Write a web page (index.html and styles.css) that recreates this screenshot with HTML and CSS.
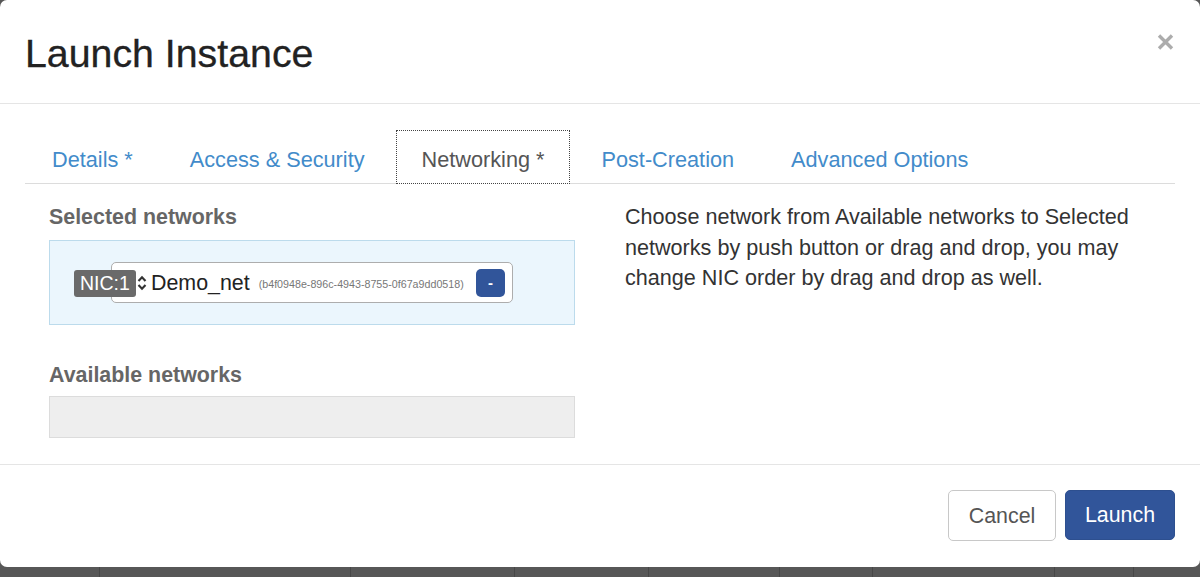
FILE: index.html
```html
<!DOCTYPE html>
<html>
<head>
<meta charset="utf-8">
<link rel="stylesheet" href="styles.css">
</head>
<body>
<div class="modal">
  <div class="modal-header">
    <h3 class="modal-title">Launch Instance</h3>
    <button class="close" aria-label="Close">
      <svg width="17" height="16" viewBox="0 0 17 16"><path d="M2 1.5 L15 14.5 M15 1.5 L2 14.5" stroke="#acacac" stroke-width="3.4" stroke-linecap="butt"/></svg>
    </button>
  </div>
  <div class="modal-body">
    <ul class="nav-tabs">
      <li class="tab"><a>Details *</a></li>
      <li class="tab"><a>Access &amp; Security</a></li>
      <li class="tab active"><a>Networking *</a></li>
      <li class="tab"><a>Post-Creation</a></li>
      <li class="tab"><a>Advanced Options</a></li>
    </ul>
    <div class="tab-content">
      <div class="left-col">
        <div class="section-title">Selected networks</div>
        <div class="selected-box">
          <div class="net-item">
            <span class="nic-badge">NIC:1</span>
            <svg class="sort-icon" width="10" height="16" viewBox="0 0 10 16"><path d="M1.5 6 L5 2.2 L8.5 6 M1.5 10 L5 13.8 L8.5 10" fill="none" stroke="#333" stroke-width="2.1"/></svg>
            <span class="net-name">Demo_net</span>
            <span class="net-id">(b4f0948e-896c-4943-8755-0f67a9dd0518)</span>
            <button class="btn-remove">-</button>
          </div>
        </div>
        <div class="section-title available">Available networks</div>
        <div class="available-box"></div>
      </div>
      <div class="right-col">
        <p class="help">Choose network from Available networks to Selected networks by push button or drag and drop, you may change NIC order by drag and drop as well.</p>
      </div>
    </div>
  </div>
  <div class="modal-footer">
    <button class="btn btn-cancel">Cancel</button>
    <button class="btn btn-launch">Launch</button>
  </div>
</div>
<div class="backdrop-table">
  <div class="cell c1"></div>
  <div class="cell c2"></div>
  <div class="cell c3"></div>
  <div class="cell c4"></div>
  <div class="cell c5"></div>
  <div class="cell c6"></div>
  <div class="cell c7"></div>
  <div class="cell c8"></div>
  <div class="cell c9"></div>
</div>
</body>
</html>
```
FILE: styles.css
```css
* { box-sizing: border-box; }
html, body { margin: 0; padding: 0; }
body {
  background: #575757;
  font-family: "Liberation Sans", Arial, Helvetica, sans-serif;
  font-size: 21.4px;
  color: #333;
  width: 1200px;
  height: 577px;
  overflow: hidden;
}
.modal {
  width: 1200px;
  height: 567px;
  background: #fff;
  border-radius: 7px;
  display: flex;
  flex-direction: column;
}
.modal-header {
  height: 104px;
  border-bottom: 1px solid #e5e5e5;
  display: flex;
  justify-content: space-between;
  align-items: flex-start;
  padding: 31px 25px 0 25px;
}
.modal-title {
  margin: 0;
  font-size: 39.3px;
  line-height: 44px;
  font-weight: normal;
  color: #222;
  -webkit-text-stroke: 0.3px #222;
}
.close {
  border: 0;
  background: none;
  padding: 0;
  margin-top: 3px;
  margin-right: 1px;
  width: 17px;
  height: 16px;
}
.close svg { display: block; }
.modal-body {
  padding: 26px 25px 0 25px;
  height: 360px;
}
.nav-tabs {
  list-style: none;
  margin: 0;
  padding: 0 0 0 1px;
  display: flex;
  border-bottom: 1px solid #dcdcdc;
  height: 54px;
}
.tab { margin-right: 5px; }
.tab a {
  display: block;
  height: 54px;
  padding: 5px 25px 0 25px;
  font-size: 21.7px;
  line-height: 48px;
  border: 1px solid transparent;
  color: #428bca;
  white-space: nowrap;
}
.tab.active a {
  border: 1px dotted #444;
  color: #555;
  background: #fff;
}
.tab-content {
  display: flex;
  padding: 0 24px;
}
.left-col {
  width: 526px;
  flex: none;
}
.section-title {
  margin-top: 21px;
  font-weight: bold;
  line-height: 24px;
  color: #666;
}
.selected-box {
  margin-top: 11px;
  height: 85px;
  background: #ebf6fd;
  border: 1px solid #bcdbec;
  padding: 21px 61px;
}
.net-item {
  position: relative;
  height: 41px;
  background: #fff;
  border: 1px solid #adadad;
  border-radius: 5px;
  display: flex;
  align-items: center;
  padding-left: 25px;
  padding-right: 7px;
}
.nic-badge {
  position: absolute;
  left: -38px;
  top: 7px;
  height: 27px;
  padding: 0 6px;
  background: #6a6a6a;
  color: #fff;
  font-size: 19.5px;
  line-height: 27px;
  border-radius: 3px;
}
.sort-icon { display: block; margin-right: 4px; }
.net-name { color: #222; line-height: 24px; }
.net-id {
  margin-left: 9px;
  font-size: 10.7px;
  color: #777;
  padding-top: 3px;
}
.btn-remove {
  margin-left: auto;
  width: 29px;
  height: 28px;
  border: 0;
  border-radius: 5px;
  background: #31559a;
  color: #fff;
  font-family: "Liberation Sans", Arial, sans-serif;
  font-weight: bold;
  font-size: 15px;
  line-height: 28px;
  padding: 0 0 4px 0;
}
.section-title.available { margin-top: 38px; }
.available-box {
  margin-top: 9px;
  height: 42px;
  background: #eee;
  border: 1px solid #dcdcdc;
}
.right-col {
  margin-left: 50px;
  flex: 1;
}
.help {
  margin: 18px 0 0 0;
  font-size: 21.6px;
  line-height: 30.5px;
  color: #333;
}
.modal-footer {
  border-top: 1px solid #e5e5e5;
  padding: 25px 25px 0 25px;
  display: flex;
  justify-content: flex-end;
  gap: 9px;
  flex: 1;
}
.btn {
  height: 51px;
  border-radius: 5px;
  font-family: "Liberation Sans", Arial, sans-serif;
  font-size: 21.4px;
  padding: 0;
}
.btn-cancel {
  width: 108px;
  background: #fff;
  border: 1px solid #c8c8c8;
  color: #555;
  padding-top: 2px;
}
.btn-launch {
  width: 110px;
  height: 50px;
  background: #31559a;
  border: 1px solid #2d4f8f;
  color: #fff;
}
.backdrop-table {
  display: flex;
  height: 10px;
}
.cell { height: 10px; border-left: 1px solid #474747; }
.c1 { width: 99px; border-left: 0; }
.c2 { width: 251px; }
.c3 { width: 164px; }
.c4 { width: 134px; }
.c5 { width: 131px; }
.c6 { width: 93px; }
.c7 { width: 182px; }
.c8 { width: 79px; }
.c9 { width: 67px; }
```
